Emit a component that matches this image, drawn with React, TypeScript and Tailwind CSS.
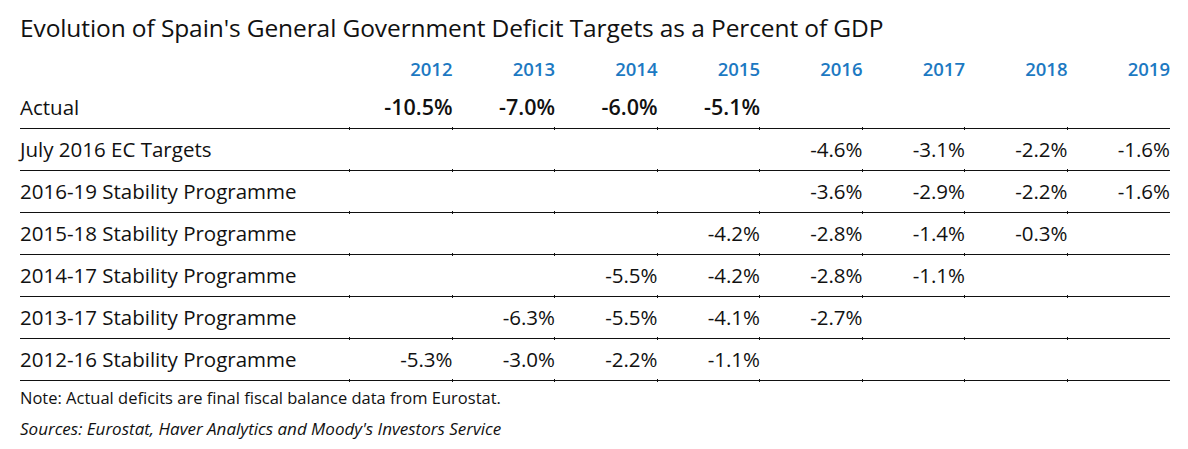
const years = ['2012', '2013', '2014', '2015', '2016', '2017', '2018', '2019'];

type Row = { label: string; values: string[]; bold?: boolean };

const rows: Row[] = [
  { label: 'Actual', values: ['-10.5%', '-7.0%', '-6.0%', '-5.1%', '', '', '', ''], bold: true },
  { label: 'July 2016 EC Targets', values: ['', '', '', '', '-4.6%', '-3.1%', '-2.2%', '-1.6%'] },
  { label: '2016-19 Stability Programme', values: ['', '', '', '', '-3.6%', '-2.9%', '-2.2%', '-1.6%'] },
  { label: '2015-18 Stability Programme', values: ['', '', '', '-4.2%', '-2.8%', '-1.4%', '-0.3%', ''] },
  { label: '2014-17 Stability Programme', values: ['', '', '-5.5%', '-4.2%', '-2.8%', '-1.1%', '', ''] },
  { label: '2013-17 Stability Programme', values: ['', '-6.3%', '-5.5%', '-4.1%', '-2.7%', '', '', ''] },
  { label: '2012-16 Stability Programme', values: ['-5.3%', '-3.0%', '-2.2%', '-1.1%', '', '', '', ''] },
];

// little tick on the rule at each column boundary
const tick =
  "relative after:absolute after:right-0 after:bottom-[-2px] after:h-[3px] after:w-px after:bg-[#111] after:content-['']";

const App = () => {
  return (
    <div className="w-[1188px] h-[449px] bg-white text-[#111] pl-[20px]" style={{ fontFamily: '"Open Sans", "Noto Sans", sans-serif' }}>
      {/* Title */}
      <div className="h-[52px] pt-[10px]">
        <h1 className="text-[24.5px] leading-[36px] font-normal tracking-[-0.1px]">
          Evolution of Spain's General Government Deficit Targets as a Percent of GDP
        </h1>
      </div>

      {/* Year header */}
      <div className="grid grid-cols-[330px_repeat(8,102.5px)] h-[35px] items-center">
        <div />
        {years.map((y) => (
          <div key={y} className="text-right text-[18.5px] font-semibold text-[#1c79c2] leading-none">
            {y}
          </div>
        ))}
      </div>

      {/* Data rows */}
      {rows.map((r) => (
        <div key={r.label} className="grid grid-cols-[330px_repeat(8,102.5px)] h-[42px]">
          <div className={`${tick} flex items-center border-b border-[#111] text-[20.5px]`}>{r.label}</div>
          {r.values.map((v, i) => (
            <div
              key={i}
              className={`${i < 7 ? tick : ''} flex items-center justify-end border-b border-[#111] ${
                r.bold ? 'font-semibold text-[21.5px]' : 'text-[20.5px]'
              }`}
            >
              {v}
            </div>
          ))}
        </div>
      ))}

      {/* Footnotes */}
      <p className="text-[16.5px] leading-[34px]">Note: Actual deficits are final fiscal balance data from Eurostat.</p>
      <p className="text-[17px] leading-[28px] italic">Sources: Eurostat, Haver Analytics and Moody's Investors Service</p>
    </div>
  );
};

export default App;
